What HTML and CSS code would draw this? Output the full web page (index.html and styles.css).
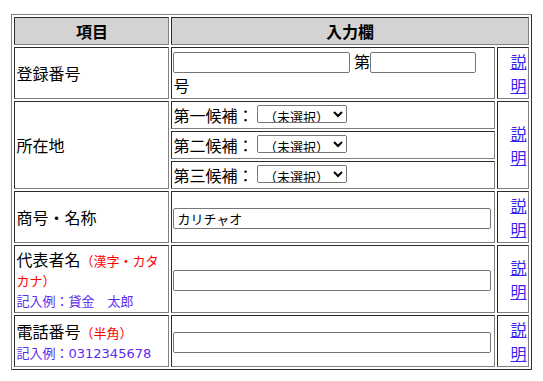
FILE: index.html
```html
<!DOCTYPE html>
<html lang="ja">
<head>
<meta charset="utf-8">
<title>入力フォーム</title>
<link rel="stylesheet" href="styles.css">
</head>
<body>
<form class="form">
<table class="grid">
  <colgroup>
    <col class="c-label">
    <col class="c-input">
    <col class="c-help">
  </colgroup>
  <thead>
    <tr>
      <th class="head">項目</th>
      <th class="head" colspan="2">入力欄</th>
    </tr>
  </thead>
  <tbody>
    <tr>
      <td class="label">登録番号</td>
      <td class="field"><input class="in in-reg1" type="text"> 第<input class="in in-reg2" type="text"><br>号</td>
      <td class="help"><a href="#">説明</a></td>
    </tr>
    <tr>
      <td class="label" rowspan="3">所在地</td>
      <td class="field">第一候補： <select class="sel"><option>（未選択）</option></select></td>
      <td class="help" rowspan="3"><a href="#">説明</a></td>
    </tr>
    <tr>
      <td class="field">第二候補： <select class="sel"><option>（未選択）</option></select></td>
    </tr>
    <tr>
      <td class="field">第三候補： <select class="sel"><option>（未選択）</option></select></td>
    </tr>
    <tr>
      <td class="label">商号・名称</td>
      <td class="field"><input class="in in-wide" type="text" value="カリチャオ"></td>
      <td class="help"><a href="#">説明</a></td>
    </tr>
    <tr>
      <td class="label multi"><span class="main">代表者名</span><span class="note">（漢字・カタカナ）</span><br><span class="example">記入例：貸金　太郎</span></td>
      <td class="field"><input class="in in-wide" type="text"></td>
      <td class="help"><a href="#">説明</a></td>
    </tr>
    <tr>
      <td class="label multi"><span class="main">電話番号</span><span class="note">（半角）</span><br><span class="example">記入例：<span class="digits">0312345678</span></span></td>
      <td class="field"><input class="in in-wide" type="text"></td>
      <td class="help"><a href="#">説明</a></td>
    </tr>
  </tbody>
</table>
</form>
</body>
</html>
```

FILE: styles.css
```css
html, body {
  margin: 0;
  padding: 0;
  background: #ffffff;
}

body {
  padding: 8px;
  font-family: "Noto Sans CJK JP", "Noto Sans", sans-serif;
  font-size: 16px;
  line-height: 24px;
  color: #000000;
}

.form {
  margin: 0;
}

.grid {
  width: 520px;
  margin: 6px auto 0;
  table-layout: fixed;
  border-collapse: separate;
  border-spacing: 2px;
  border: 1px outset #808080;
}

.c-label { width: 155px; }
.c-input { width: 324px; }
.c-help  { width: 31px; }

.grid th,
.grid td {
  border: 1px inset #808080;
  padding: 1px;
  vertical-align: middle;
}

.head {
  background: #d3d3d3;
  font-weight: bold;
  text-align: center;
  height: 24px;
}

.label {
  text-align: left;
}

.label.multi {
  font-size: 13px;
  line-height: 20px;
}

.main {
  font-size: 16px;
  line-height: 24px;
}

.field {
  text-align: left;
  white-space: nowrap;
}

.help {
  text-align: right;
  word-break: break-all;
}

.help a {
  color: #3a1ff0;
  text-decoration: underline;
}

.note {
  color: #ff0000;
  font-size: 13px;
  line-height: 20px;
}

.example {
  color: #5a2cf0;
  font-size: 13px;
  line-height: 20px;
}

.digits {
  font-family: "DejaVu Sans", "Noto Sans CJK JP", sans-serif;
  font-size: 13px;
}

.in {
  box-sizing: border-box;
  height: 21px;
  margin: 0;
  padding: 1px 3px;
  border: 1px solid #767676;
  border-radius: 2px;
  font-family: "Noto Sans CJK JP", sans-serif;
  font-size: 13px;
  line-height: 17px;
  background: #ffffff;
  color: #000000;
}

.in-reg1 { width: 177px; }
.in-reg2 { width: 106px; }
.in-wide { width: 318px; }

.sel {
  box-sizing: border-box;
  width: 90px;
  height: 18px;
  margin: 0;
  padding: 0 0 0 2px;
  border: 1px solid #767676;
  border-radius: 2px;
  font-family: "Noto Sans CJK JP", sans-serif;
  font-size: 13px;
  background: #ffffff;
  color: #000000;
}
```
